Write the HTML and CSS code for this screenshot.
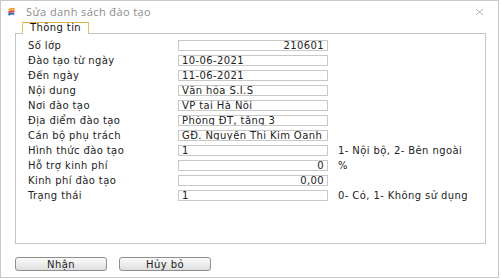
FILE: index.html
```html
<!DOCTYPE html>
<html lang="vi">

<head>
    <meta charset="UTF-8">
    <meta name="viewport" content="width=device-width, initial-scale=1.0">
    <title>Sửa danh sách đào tạo</title>
    <link rel="stylesheet" href="styles.css">
</head>

<body>
    <div class="window">
        <div class="title-bar">
            <svg class="app-icon" width="7" height="8" viewBox="0 0 7 8">
                <path d="M0.8 2 Q3.5 0 6.6 1.2" stroke="#f2a22c" stroke-width="2" fill="none"/>
                <path d="M0.4 4.4 Q3.5 2.4 6.6 3.6" stroke="#e2472a" stroke-width="2" fill="none"/>
                <path d="M0.4 6.8 Q3.5 4.8 6.2 6" stroke="#2c6cc2" stroke-width="2" fill="none"/>
            </svg>
            <span class="title">Sửa danh sách đào tạo</span>
            <svg class="close" width="7" height="6" viewBox="0 0 7 6">
                <path d="M0 0 L7 6 M7 0 L0 6" stroke="#b4b4b4" stroke-width="1"/>
            </svg>
        </div>

        <div class="content">
            <div class="tabs">
                <div class="tab active">Thông tin</div>
            </div>
            <div class="panel">
                <div class="row">
                    <span class="label">Số lớp</span>
                    <span class="field num">210601</span>
                </div>
                <div class="row">
                    <span class="label">Đào tạo từ ngày</span>
                    <span class="field">10-06-2021</span>
                </div>
                <div class="row">
                    <span class="label">Đến ngày</span>
                    <span class="field">11-06-2021</span>
                </div>
                <div class="row">
                    <span class="label">Nội dung</span>
                    <span class="field">Văn hóa S.I.S</span>
                </div>
                <div class="row">
                    <span class="label">Nơi đào tạo</span>
                    <span class="field">VP tại Hà Nội</span>
                </div>
                <div class="row">
                    <span class="label">Địa điểm đào tạo</span>
                    <span class="field">Phòng ĐT, tầng 3</span>
                </div>
                <div class="row">
                    <span class="label">Cán bộ phụ trách</span>
                    <span class="field">GĐ. Nguyễn Thị Kim Oanh</span>
                </div>
                <div class="row">
                    <span class="label">Hình thức đào tạo</span>
                    <span class="field">1</span>
                    <span class="hint">1- Nội bộ, 2- Bên ngoài</span>
                </div>
                <div class="row">
                    <span class="label">Hỗ trợ kinh phí</span>
                    <span class="field num">0</span>
                    <span class="hint">%</span>
                </div>
                <div class="row">
                    <span class="label">Kinh phí đào tạo</span>
                    <span class="field num">0,00</span>
                </div>
                <div class="row">
                    <span class="label">Trạng thái</span>
                    <span class="field">1</span>
                    <span class="hint">0- Có, 1- Không sử dụng</span>
                </div>
            </div>

            <div class="buttons">
                <button class="btn">Nhận</button>
                <button class="btn">Hủy bỏ</button>
            </div>
        </div>
    </div>
</body>

</html>
```

FILE: styles.css
```css
body {
    margin: 0;
    padding: 0;
    background: #ffffff;
    font-family: "DejaVu Sans", Verdana, sans-serif;
    font-size: 10px;
    letter-spacing: 0.4px;
    color: #222;
}

.window {
    width: 499px;
    height: 278px;
    box-sizing: border-box;
    border: 1px solid #c9c9c9;
    background: #fff;
}

.title-bar {
    height: 21px;
    display: flex;
    align-items: center;
    padding-left: 7px;
    padding-right: 15px;
}

.app-icon {
    margin-right: 11px;
}

.title {
    font-family: "Open Sans", sans-serif;
    font-size: 11px;
    letter-spacing: 0.4px;
    color: #8c8c8c;
    flex: 1;
}

/* Tab + panel */
.content {
    padding-left: 14px;
    padding-right: 12px;
}

.tabs {
    display: flex;
    padding-left: 7px;
    position: relative;
    z-index: 1;
}

.tab {
    height: 11px;
    line-height: 10px;
    padding: 0 6px 0 7px;
    width: 52px;
    border: 1px solid #e2c068;
    border-top-color: #dcae48;
    border-bottom: none;
    background: #fff;
    color: #111;
}

.panel {
    border: 1px solid #c4c4c4;
    margin-top: -1px;
    padding: 4px 12px 39px 12px;
    height: 166px;
}

.row {
    height: 15px;
    display: flex;
    align-items: center;
}

.label {
    width: 150px;
}

.field {
    width: 150px;
    height: 11px;
    box-sizing: border-box;
    border: 1px solid #c8c8c8;
    line-height: 9px;
    padding: 0 3px;
    background: #fff;
    overflow: hidden;
    white-space: nowrap;
}

.field.num {
    text-align: right;
}

.hint {
    margin-left: 10px;
}

/* Buttons */
.buttons {
    display: flex;
    gap: 12px;
    margin-top: 13px;
}

.btn {
    width: 92px;
    height: 14px;
    padding: 0;
    font-family: "DejaVu Sans", Verdana, sans-serif;
    font-size: 10px;
    letter-spacing: 0.4px;
    color: #222;
    border: 1px solid #8e8e8e;
    border-radius: 3px;
    background: linear-gradient(#fbfbfb, #dedede);
}
```
